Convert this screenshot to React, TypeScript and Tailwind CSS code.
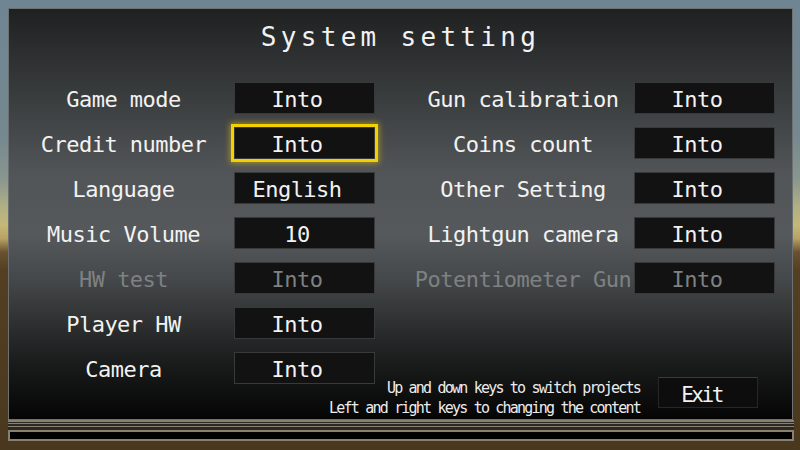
import React from 'react';

// Arcade cabinet "System setting" service menu.
type Row = { label: string; value: string; disabled?: boolean; selected?: boolean };

const LEFT: Row[] = [
  { label: 'Game mode', value: 'Into' },
  { label: 'Credit number', value: 'Into', selected: true },
  { label: 'Language', value: 'English' },
  { label: 'Music Volume', value: '10' },
  { label: 'HW test', value: 'Into', disabled: true },
  { label: 'Player HW', value: 'Into' },
  { label: 'Camera', value: 'Into' },
];

const RIGHT: (Row | null)[] = [
  { label: 'Gun calibration', value: 'Into' },
  { label: 'Coins count', value: 'Into' },
  { label: 'Other Setting', value: 'Into' },
  { label: 'Lightgun camera', value: 'Into' },
  { label: 'Potentiometer Gun', value: 'Into', disabled: true },
  null,
  null,
];

const mono = "font-['DejaVu_Sans_Mono','Liberation_Mono',monospace]";

function ValueBox({ row }: { row: Row }) {
  return (
    <div
      className={`h-[32px] w-[141px] shrink-0 border border-[#37393a] bg-[#121212] pr-[15px] pt-[3px] text-center text-[22px] leading-[27px] tracking-[-0.5px] whitespace-nowrap ${
        row.disabled ? 'text-[#7e8182]' : 'text-[#f2f2f2]'
      } ${
        row.selected
          ? 'outline-[3px] outline-solid outline-[#f3d000] shadow-[0_0_6px_4px_rgba(255,214,0,0.5)]'
          : ''
      }`}
    >
      {row.value}
    </div>
  );
}

function Label({ row, width }: { row: Row; width: string }) {
  return (
    <div
      className={`${width} h-[32px] shrink-0 pt-[3px] text-center text-[22px] leading-[29px] tracking-[-0.5px] whitespace-nowrap ${
        row.disabled ? 'text-[#7e8182]' : 'text-[#f2f2f2]'
      }`}
    >
      {row.label}
    </div>
  );
}

export default function App() {
  return (
    <div
      className={`${mono} flex h-[450px] w-[800px] flex-col overflow-hidden pl-[8px] pt-[8px] bg-[linear-gradient(180deg,#6f8593_0%,#75888f_30%,#8a978f_40%,#b0b083_46%,#c5b877_50%,#b8a265_53%,#6a5230_56%,#533f22_60%,#4a381e_100%)]`}
    >
      <div className="flex h-[412px] w-[785px] flex-col border border-[#6c7173] bg-[linear-gradient(180deg,#1f2121_0%,#383b3c_20%,#525557_40%,#56595b_55%,#45484a_66%,#2f3132_76%,#191a1a_87%,#050505_100%)]">
        <div className="mt-[15px] h-[26px] text-center text-[26px] leading-[26px] tracking-[4.3px] text-[#f2f2f2]">
          System setting
        </div>

        <div className="mt-[32px] flex flex-col gap-[13px]">
          {LEFT.map((l, i) => {
            const r = RIGHT[i];
            return (
              <div key={l.label} className="flex h-[32px] items-center pl-[14px]">
                <Label row={l} width="w-[201px]" />
                <div className="ml-[10px]">
                  <ValueBox row={l} />
                </div>
                {r && (
                  <>
                    <div className="ml-[38px]">
                      <Label row={r} width="w-[220px]" />
                    </div>
                    <div className="ml-[1px]">
                      <ValueBox row={r} />
                    </div>
                  </>
                )}
              </div>
            );
          })}
        </div>

        <div className="mt-[-7px] flex items-start justify-end pr-[34px]">
          <div className="mt-[1px] text-right text-[15px] leading-[20px] tracking-[-1.8px] whitespace-nowrap text-[#ececec]">
            <div>Up and down keys to switch projects</div>
            <div>Left and right keys to changing the content</div>
          </div>
          <div className="ml-[18px] h-[31px] w-[100px] border border-[#262626] border-t-[#3a3a3a] bg-[#0d0d0d] pr-[13px] pt-[5px] text-center text-[21px] leading-[24px] tracking-[-2.5px] text-[#f2f2f2]">
            Exit
          </div>
        </div>
      </div>

      <div className="flex w-[786px] flex-col">
        <div className="h-[2px] bg-[#8a8070]" />
        <div className="h-[1px] bg-[#2b2924]" />
        <div className="h-[1px] bg-[#8a8070]" />
        <div className="h-[2px] bg-[#2b2924]" />
        <div className="h-[1px] bg-[#8a8070]" />
        <div className="h-[3px] bg-[#2b2924]" />
        <div className="h-[11px] border-2 border-[#8a8070] bg-black" />
      </div>
    </div>
  );
}
